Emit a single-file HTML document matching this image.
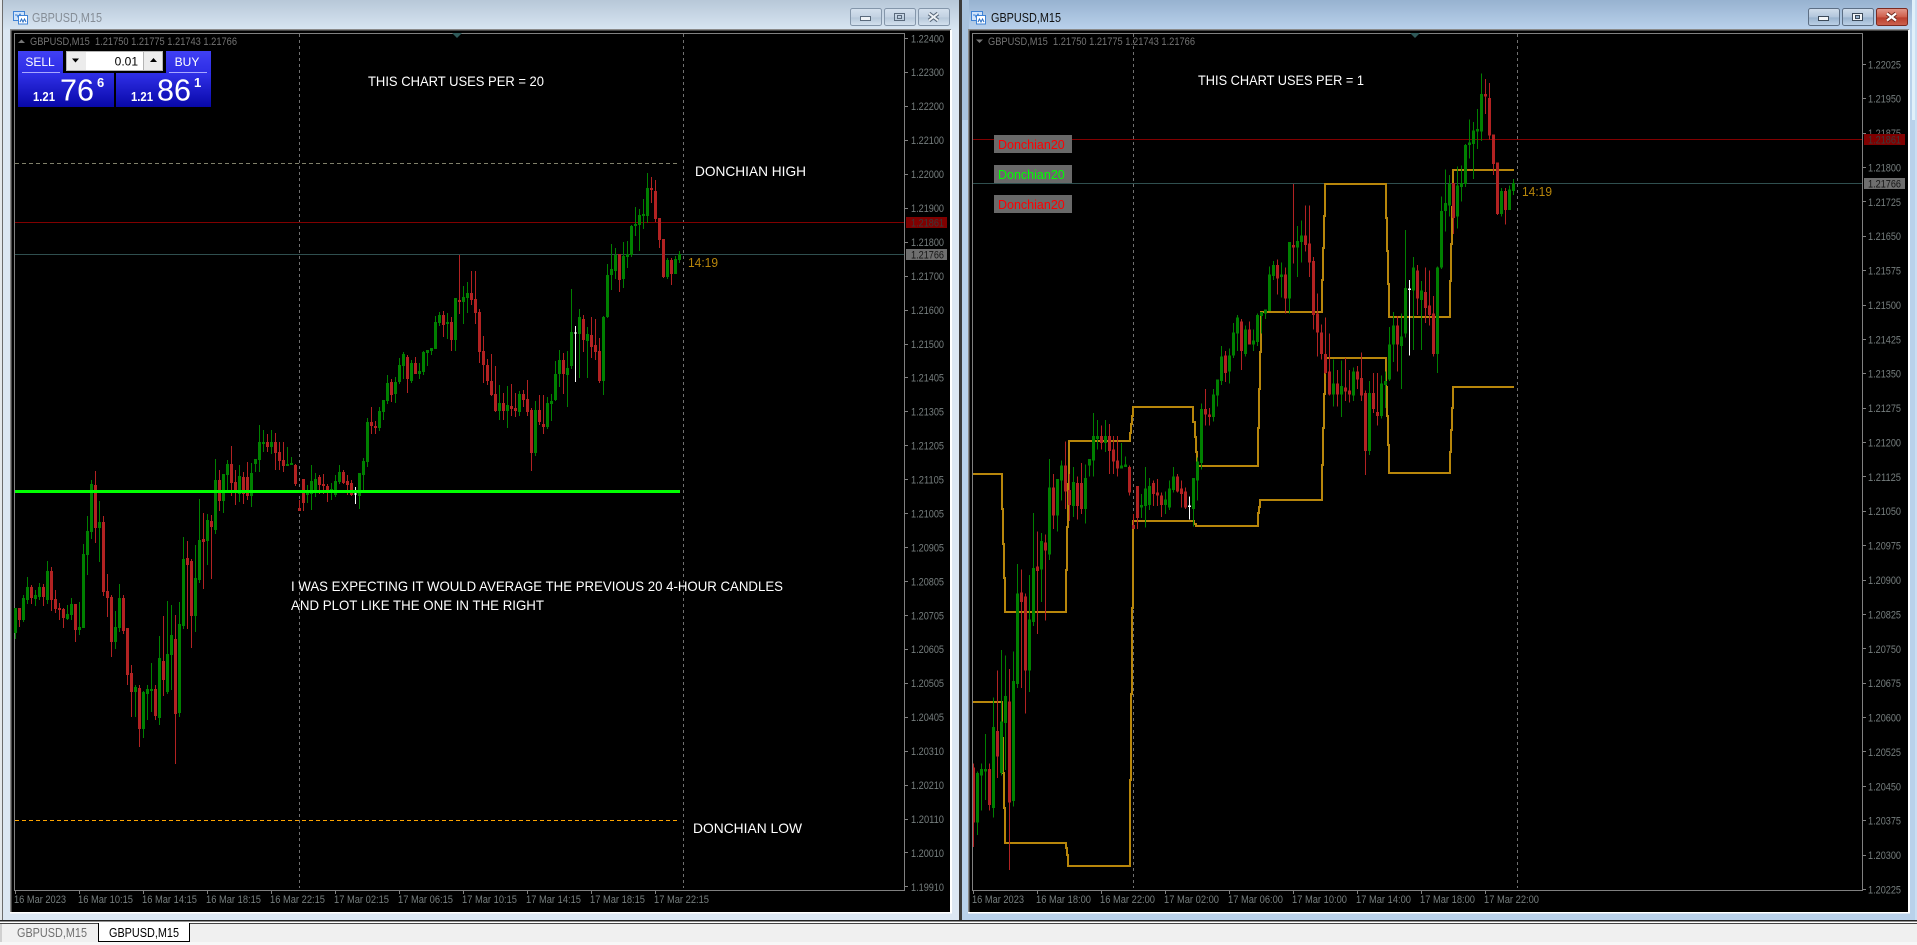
<!DOCTYPE html>
<html><head><meta charset="utf-8"><title>GBPUSD,M15</title>
<style>
html,body{margin:0;padding:0;background:#f0f0f0;overflow:hidden;width:1917px;height:945px}
svg{display:block;position:absolute;left:0;top:0}
text{font-family:"Liberation Sans",sans-serif}
</style></head><body>
<svg width="1917" height="945" viewBox="0 0 1917 945" xmlns="http://www.w3.org/2000/svg">
<defs>
<linearGradient id="ti" x1="0" y1="0" x2="0" y2="1"><stop offset="0" stop-color="#b7c7d8"/><stop offset="1" stop-color="#d8e5f2"/></linearGradient>
<linearGradient id="ta" x1="0" y1="0" x2="0" y2="1"><stop offset="0" stop-color="#97b2d0"/><stop offset="1" stop-color="#bad2ec"/></linearGradient>
<linearGradient id="bi" x1="0" y1="0" x2="0" y2="1"><stop offset="0" stop-color="#d5e1ee"/><stop offset=".5" stop-color="#c3d2e2"/><stop offset=".55" stop-color="#b6c8da"/><stop offset="1" stop-color="#d5e2ef"/></linearGradient>
<linearGradient id="ba" x1="0" y1="0" x2="0" y2="1"><stop offset="0" stop-color="#d2deec"/><stop offset=".5" stop-color="#b2c6dc"/><stop offset=".55" stop-color="#9ab3ce"/><stop offset="1" stop-color="#bdd2e8"/></linearGradient>
<linearGradient id="bc" x1="0" y1="0" x2="0" y2="1"><stop offset="0" stop-color="#e39a8c"/><stop offset=".5" stop-color="#cf5f4c"/><stop offset=".55" stop-color="#bb3f2d"/><stop offset="1" stop-color="#cc6350"/></linearGradient>
<linearGradient id="pb" x1="0" y1="0" x2="0" y2="1"><stop offset="0" stop-color="#3030e8"/><stop offset="1" stop-color="#0808a8"/></linearGradient>
<linearGradient id="hb" x1="0" y1="0" x2="0" y2="1"><stop offset="0" stop-color="#4040f4"/><stop offset="1" stop-color="#2c2ce4"/></linearGradient>
<clipPath id="rc"><rect x="973" y="34" width="889" height="856"/></clipPath>
<g id="candles" fill="none" shape-rendering="crispEdges">
<path stroke="#008000" stroke-width="1" d="M15.5 608V639M23.5 595V622M27.5 577V604M35.5 590V606M39.5 583V600M47.5 561V604M67.5 605V620M71.5 598V620M79.5 602V635M83.5 544V628M87.5 516V575M91.5 480V539M99.5 501V562M115.5 611V649M119.5 584V632M135.5 685V717M143.5 691V738M147.5 685V720M151.5 663V712M159.5 636V725M167.5 601V694M171.5 605V690M179.5 602V717M183.5 537V629M195.5 545V632M199.5 499V583M207.5 514V565M215.5 459V534M223.5 474V513M227.5 460V490M239.5 465V502M251.5 463V507M255.5 459V472M259.5 425V472M263.5 430V452M271.5 430V454M287.5 447V466M291.5 457V465M307.5 485V503M311.5 465V510M315.5 473V497M331.5 483V500M335.5 475V497M339.5 465V484M359.5 473V509M363.5 458V490M367.5 418V467M379.5 407V431M383.5 400V420M387.5 375V404M395.5 377V403M399.5 358V384M403.5 352V379M411.5 360V383M419.5 363V379M423.5 351V375M427.5 350V366M431.5 348V355M435.5 316V349M439.5 312V326M447.5 313V339M455.5 298V351M463.5 286V324M467.5 282V313M499.5 385V420M507.5 386V428M519.5 391V416M535.5 401V456M547.5 397V429M551.5 394V421M555.5 361V401M559.5 350V387M567.5 351V407M571.5 289V369M579.5 309V378M587.5 327V378M603.5 316V395M607.5 264V318M611.5 244V290M615.5 248V279M623.5 242V288M627.5 241V268M631.5 225V257M635.5 207V236M639.5 209V251M643.5 199V229M647.5 173V223M667.5 258V279M675.5 256V274M679.5 251V263"/>
<path stroke="#008000" stroke-width="3" d="M15.5 608V633M23.5 598V620M27.5 587V600M35.5 595V599M39.5 587V597M47.5 571V600M67.5 614V619M71.5 604V615M79.5 627V630M83.5 554V628M87.5 531V555M91.5 484V532M99.5 522V528M115.5 627V642M119.5 598V628M135.5 687V692M143.5 692V729M147.5 689V694M151.5 689V691M159.5 658V718M167.5 654V692M171.5 635V655M179.5 624V713M183.5 559V626M195.5 578V616M199.5 540V580M207.5 520V541M215.5 480V530M223.5 474V501M227.5 464V475M239.5 476V494M251.5 473V496M255.5 459V464M259.5 442V460M263.5 442V444M271.5 442V447M287.5 464V466M291.5 463V465M307.5 493V495M311.5 481V494M315.5 479V493M331.5 489V493M335.5 481V495M339.5 472V482M359.5 473V496M363.5 461V475M367.5 422V462M379.5 411V428M383.5 400V412M387.5 383V401M395.5 382V394M399.5 365V382M403.5 354V366M411.5 363V381M419.5 371V374M423.5 352V372M427.5 350V353M431.5 348V351M435.5 322V349M439.5 315V323M447.5 322V324M455.5 298V340M463.5 297V302M467.5 293V298M499.5 403V411M507.5 405V411M519.5 394V412M535.5 410V453M547.5 403V427M551.5 401V404M555.5 374V400M559.5 360V374M567.5 368V375M571.5 332V366M579.5 317V334M587.5 334V341M603.5 317V381M607.5 275V317M611.5 269V275M615.5 255V271M623.5 256V279M627.5 254V257M631.5 226V255M635.5 224V226M639.5 215V225M643.5 214V216M647.5 188V216M667.5 260V277M675.5 259V274M679.5 254V260"/>
<path stroke="#b22222" stroke-width="1" d="M19.5 608V627M31.5 585V604M43.5 584V606M51.5 567V611M55.5 590V613M59.5 603V620M63.5 608V628M75.5 604V642M95.5 471V543M103.5 516V596M107.5 574V617M111.5 595V657M123.5 595V634M127.5 628V685M131.5 665V717M139.5 685V747M155.5 685V720M163.5 616V696M175.5 615V764M187.5 541V629M191.5 559V648M203.5 513V589M211.5 515V579M219.5 470V511M231.5 446V496M235.5 470V505M243.5 472V504M247.5 462V500M267.5 434V452M275.5 433V470M279.5 442V470M283.5 442V472M295.5 464V486M299.5 500V511M303.5 479V511M319.5 475V494M323.5 474V494M327.5 484V502M343.5 470V484M347.5 475V495M351.5 480V496M371.5 407V434M375.5 421V434M391.5 379V402M407.5 355V393M415.5 357V374M443.5 311V337M451.5 317V351M459.5 255V314M471.5 271V305M475.5 271V324M479.5 309V363M483.5 336V383M487.5 359V385M491.5 354V396M495.5 366V412M503.5 393V420M511.5 384V416M515.5 393V417M523.5 390V407M527.5 380V416M531.5 408V471M539.5 395V425M543.5 395V434M563.5 353V394M583.5 315V352M591.5 317V358M595.5 319V360M599.5 338V383M619.5 254V292M651.5 177V203M655.5 180V222M659.5 218V248M663.5 239V278M671.5 258V285"/>
<path stroke="#b22222" stroke-width="3" d="M19.5 608V620M31.5 587V598M43.5 587V597M51.5 571V600M55.5 599V609M59.5 608V610M63.5 609V618M75.5 604V630M95.5 485V528M103.5 522V592M107.5 591V598M111.5 597V642M123.5 598V631M127.5 628V675M131.5 673V692M139.5 688V729M155.5 689V716M163.5 661V680M175.5 639V714M187.5 558V565M191.5 561V616M203.5 539V542M211.5 521V527M219.5 480V501M231.5 464V483M235.5 482V493M243.5 477V494M247.5 477V496M267.5 442V447M275.5 442V453M279.5 452V461M283.5 460V466M295.5 465V484M299.5 508V511M303.5 479V503M319.5 477V485M323.5 484V486M327.5 486V493M343.5 472V483M347.5 481V485M351.5 483V495M371.5 422V426M375.5 426V428M391.5 382V395M407.5 357V379M415.5 363V374M443.5 315V325M451.5 322V340M459.5 300V302M471.5 293V300M475.5 299V313M479.5 312V352M483.5 351V365M487.5 365V381M491.5 381V395M495.5 394V411M503.5 403V411M511.5 406V409M515.5 408V411M523.5 394V400M527.5 399V412M531.5 410V453M539.5 410V422M543.5 424V427M563.5 360V374M583.5 319V340M591.5 335V347M595.5 345V352M599.5 351V381M619.5 254V280M651.5 188V190M655.5 191V219M659.5 218V240M663.5 239V277M671.5 260V274"/>
<path stroke="#ffffff" stroke-width="1" d="M355.5 487V504M354 494H357M575.5 326V382M574 333H577"/>
</g>
</defs>

<!-- background frames -->
<rect x="0" y="0" width="961" height="921" fill="#dce7f3"/>
<rect x="0" y="0" width="961" height="30" fill="url(#ti)"/>
<rect x="0" y="0" width="2" height="921" fill="#e4e8ec"/>
<rect x="2" y="0" width="1" height="921" fill="#6c6c6c"/>
<rect x="962" y="0" width="955" height="921" fill="#b9d1ea"/>
<rect x="962" y="0" width="955" height="30" fill="url(#ta)"/>
<rect x="959" y="0" width="3" height="921" fill="#3a3a3a"/>
<rect x="962" y="0" width="7" height="120" fill="#a8c2dd"/>
<rect x="1912" y="0" width="3" height="120" fill="#e0f0fa"/>
<rect x="1915" y="0" width="2" height="921" fill="#c9def2"/>

<!-- left window -->
<rect x="11" y="30" width="939" height="882" fill="#000"/>
<rect x="10" y="29" width="941" height="1.5" fill="#8a8a8a"/>
<rect x="10" y="29" width="1.5" height="883" fill="#8a8a8a"/>
<rect x="10" y="912" width="942" height="1.5" fill="#fff"/>
<rect x="950" y="30" width="2" height="883" fill="#fff"/>

<!-- right window -->
<rect x="969" y="30" width="939" height="882" fill="#000"/>
<rect x="968" y="29" width="941" height="1.5" fill="#8a8a8a"/>
<rect x="968" y="29" width="1.5" height="883" fill="#8a8a8a"/>
<rect x="968" y="912" width="942" height="1.5" fill="#fff"/>
<rect x="1908" y="30" width="2" height="883" fill="#fff"/>

<!-- title left -->
<g>
<rect x="13.5" y="11.5" width="11" height="9" fill="#cfe3fa" stroke="#3f83d6"/>
<rect x="18.5" y="15.5" width="9" height="8.5" fill="#fff" stroke="#3f83d6"/>
<path d="M15 15h2l1 2 2-3 1 2" fill="none" stroke="#3f83d6"/>
<path d="M20 22l1.5-3 1.5 3 1.5-3 1.5 3" fill="none" stroke="#2a6fc4"/>
</g>
<text x="32" y="22" font-size="13" fill="#858d96" textLength="70" lengthAdjust="spacingAndGlyphs">GBPUSD,M15</text>
<g>
<rect x="850.5" y="8.5" width="31" height="17" rx="2" fill="url(#bi)" stroke="#8496aa"/>
<rect x="884.5" y="8.5" width="31" height="17" rx="2" fill="url(#bi)" stroke="#8496aa"/>
<rect x="918.5" y="8.5" width="31" height="17" rx="2" fill="url(#bi)" stroke="#8496aa"/>
<rect x="860.5" y="16.5" width="10" height="4" fill="#eef2f6" stroke="#5a6a7c"/>
<rect x="894.5" y="13.5" width="10" height="7" fill="none" stroke="#5a6a7c" stroke-width="1"/>
<rect x="897.5" y="15.5" width="4" height="3" fill="none" stroke="#5a6a7c"/>
<path d="M929 13.5l9 7M938 13.5l-9 7" stroke="#5a6a7c" stroke-width="4"/>
<path d="M929 13.5l9 7M938 13.5l-9 7" stroke="#eef2f6" stroke-width="2"/>
</g>

<!-- title right -->
<g>
<rect x="971.5" y="11.5" width="11" height="9" fill="#cfe3fa" stroke="#3f83d6"/>
<rect x="976.5" y="15.5" width="9" height="8.5" fill="#fff" stroke="#3f83d6"/>
<path d="M973 15h2l1 2 2-3 1 2" fill="none" stroke="#3f83d6"/>
<path d="M978 22l1.5-3 1.5 3 1.5-3 1.5 3" fill="none" stroke="#2a6fc4"/>
</g>
<text x="991" y="22" font-size="13" fill="#111" textLength="70" lengthAdjust="spacingAndGlyphs">GBPUSD,M15</text>
<g>
<rect x="1808.5" y="8.5" width="31" height="17" rx="2" fill="url(#ba)" stroke="#5d6f85"/>
<rect x="1842.5" y="8.5" width="31" height="17" rx="2" fill="url(#ba)" stroke="#5d6f85"/>
<rect x="1876.5" y="8.5" width="31" height="17" rx="2" fill="url(#bc)" stroke="#7b2a20"/>
<rect x="1818.5" y="16.5" width="10" height="4" fill="#f2f5f8" stroke="#3c4a5a"/>
<rect x="1852.5" y="13.5" width="10" height="7" fill="#f2f5f8" stroke="#3c4a5a"/>
<rect x="1855.5" y="15.5" width="4" height="3" fill="#9ab3ce" stroke="#3c4a5a"/>
<path d="M1887 13.5l9 7M1896 13.5l-9 7" stroke="#6e2a20" stroke-width="4"/>
<path d="M1887 13.5l9 7M1896 13.5l-9 7" stroke="#fff" stroke-width="2.2"/>
</g>

<!-- LEFT CHART -->
<path d="M14.5 33.5H904.5V890.5H14.5Z" fill="none" stroke="#808080" shape-rendering="crispEdges"/>
<path d="M457 33h10l-5 5z" transform="translate(-5 0)" fill="#2f5a5a"/>
<path d="M299.5 34V888M683.5 34V888" stroke="#707070" stroke-dasharray="3 3" shape-rendering="crispEdges"/>
<path d="M15 163.5H678" stroke="#80806a" stroke-dasharray="4 3" shape-rendering="crispEdges"/>
<path d="M15 222.5H904" stroke="#800000" shape-rendering="crispEdges"/>
<path d="M15 254.5H904" stroke="#2f4f4f" shape-rendering="crispEdges"/>
<use href="#candles"/>
<rect x="15" y="490" width="665" height="3" fill="#00ff00"/>
<path d="M15 820.5H678" stroke="#ffa500" stroke-dasharray="4 3" shape-rendering="crispEdges"/>

<path d="M18 43l3.5-3.5 3.5 3.5z" fill="#777"/>
<text x="30" y="45" font-size="11" fill="#737373" textLength="207" lengthAdjust="spacingAndGlyphs" xml:space="preserve">GBPUSD,M15  1.21750 1.21775 1.21743 1.21766</text>

<!-- one click trading -->
<rect x="18" y="51" width="45" height="23" fill="url(#hb)"/>
<rect x="166" y="51" width="45" height="23" fill="url(#hb)"/>
<rect x="18" y="73" width="96" height="34" fill="url(#pb)"/>
<rect x="116" y="73" width="95" height="34" fill="url(#pb)"/>
<rect x="22" y="72" width="38" height="1" fill="#a8a8ff"/>
<rect x="169" y="72" width="38" height="1" fill="#a8a8ff"/>
<text x="40" y="66" font-size="12" fill="#fff" text-anchor="middle">SELL</text>
<text x="187" y="66" font-size="12" fill="#fff" text-anchor="middle">BUY</text>
<rect x="66" y="51" width="97" height="20" fill="#b4b4b4"/>
<rect x="67" y="52" width="19" height="18" fill="#ececec"/>
<rect x="86" y="52" width="57" height="18" fill="#fff"/>
<rect x="144" y="52" width="18" height="18" fill="#ececec"/>
<path d="M72 58.5h7l-3.500 4z" fill="#000"/>
<path d="M150 62h7l-3.500-4z" fill="#000"/>
<text x="138" y="65.500" font-size="12" fill="#000" text-anchor="end">0.01</text>
<text x="33" y="101" font-size="13" font-weight="bold" fill="#fff" textLength="22" lengthAdjust="spacingAndGlyphs">1.21</text>
<text x="60" y="100.500" font-size="31" fill="#fff" textLength="34" lengthAdjust="spacingAndGlyphs">76</text>
<text x="97" y="87" font-size="13" font-weight="bold" fill="#fff">6</text>
<text x="131" y="101" font-size="13" font-weight="bold" fill="#fff" textLength="22" lengthAdjust="spacingAndGlyphs">1.21</text>
<text x="157" y="100.500" font-size="31" fill="#fff" textLength="34" lengthAdjust="spacingAndGlyphs">86</text>
<text x="194" y="87" font-size="13" font-weight="bold" fill="#fff">1</text>

<!-- left annotations -->
<g fill="#fff" font-size="14">
<text x="368" y="86" textLength="176" lengthAdjust="spacingAndGlyphs">THIS CHART USES PER = 20</text>
<text x="695" y="176" textLength="111" lengthAdjust="spacingAndGlyphs">DONCHIAN HIGH</text>
<text x="693" y="833" textLength="109" lengthAdjust="spacingAndGlyphs">DONCHIAN LOW</text>
<text x="291" y="591" textLength="492" lengthAdjust="spacingAndGlyphs">I WAS EXPECTING IT WOULD AVERAGE THE PREVIOUS 20 4-HOUR CANDLES</text>
<text x="291" y="610" textLength="253" lengthAdjust="spacingAndGlyphs">AND PLOT LIKE THE ONE IN THE RIGHT</text>
<text x="1198" y="85" textLength="166" lengthAdjust="spacingAndGlyphs">THIS CHART USES PER = 1</text>
</g>
<text x="688" y="267" font-size="13" fill="#b8860b" textLength="30" lengthAdjust="spacingAndGlyphs">14:19</text>

<!-- left price axis -->
<path stroke="#808080" shape-rendering="crispEdges" d="M905 38.500h3M905 72.500h3M905 106.500h3M905 140.500h3M905 174.500h3M905 208.500h3M905 242.500h3M905 276.500h3M905 310.500h3M905 344.500h3M905 377.500h3M905 411.500h3M905 445.500h3M905 479.500h3M905 513.500h3M905 547.500h3M905 581.500h3M905 615.500h3M905 649.500h3M905 683.500h3M905 717.500h3M905 751.500h3M905 785.500h3M905 819.500h3M905 852.500h3M905 886.500h3"/>
<g font-size="11" fill="#767e7e">
<text x="911" y="42.300" textLength="33" lengthAdjust="spacingAndGlyphs">1.22400</text>
<text x="911" y="76.200" textLength="33" lengthAdjust="spacingAndGlyphs">1.22300</text>
<text x="911" y="110.200" textLength="33" lengthAdjust="spacingAndGlyphs">1.22200</text>
<text x="911" y="144.100" textLength="33" lengthAdjust="spacingAndGlyphs">1.22100</text>
<text x="911" y="178.100" textLength="33" lengthAdjust="spacingAndGlyphs">1.22000</text>
<text x="911" y="212" textLength="33" lengthAdjust="spacingAndGlyphs">1.21900</text>
<text x="911" y="246" textLength="33" lengthAdjust="spacingAndGlyphs">1.21800</text>
<text x="911" y="279.900" textLength="33" lengthAdjust="spacingAndGlyphs">1.21700</text>
<text x="911" y="313.800" textLength="33" lengthAdjust="spacingAndGlyphs">1.21600</text>
<text x="911" y="347.800" textLength="33" lengthAdjust="spacingAndGlyphs">1.21500</text>
<text x="911" y="381.700" textLength="33" lengthAdjust="spacingAndGlyphs">1.21405</text>
<text x="911" y="415.600" textLength="33" lengthAdjust="spacingAndGlyphs">1.21305</text>
<text x="911" y="449.600" textLength="33" lengthAdjust="spacingAndGlyphs">1.21205</text>
<text x="911" y="483.500" textLength="33" lengthAdjust="spacingAndGlyphs">1.21105</text>
<text x="911" y="517.500" textLength="33" lengthAdjust="spacingAndGlyphs">1.21005</text>
<text x="911" y="551.400" textLength="33" lengthAdjust="spacingAndGlyphs">1.20905</text>
<text x="911" y="585.300" textLength="33" lengthAdjust="spacingAndGlyphs">1.20805</text>
<text x="911" y="619.300" textLength="33" lengthAdjust="spacingAndGlyphs">1.20705</text>
<text x="911" y="653.200" textLength="33" lengthAdjust="spacingAndGlyphs">1.20605</text>
<text x="911" y="687.200" textLength="33" lengthAdjust="spacingAndGlyphs">1.20505</text>
<text x="911" y="721.100" textLength="33" lengthAdjust="spacingAndGlyphs">1.20405</text>
<text x="911" y="755" textLength="33" lengthAdjust="spacingAndGlyphs">1.20310</text>
<text x="911" y="789" textLength="33" lengthAdjust="spacingAndGlyphs">1.20210</text>
<text x="911" y="822.900" textLength="33" lengthAdjust="spacingAndGlyphs">1.20110</text>
<text x="911" y="856.900" textLength="33" lengthAdjust="spacingAndGlyphs">1.20010</text>
<text x="911" y="890.800" textLength="33" lengthAdjust="spacingAndGlyphs">1.19910</text>
</g>
<rect x="906" y="217" width="41" height="11" fill="#800000"/>
<text x="911" y="226.500" font-size="11" fill="#3a3a3a" textLength="33" lengthAdjust="spacingAndGlyphs">1.21861</text>
<rect x="906" y="249" width="41" height="11" fill="#6e6e6e"/>
<text x="911" y="258.500" font-size="11" fill="#151515" textLength="33" lengthAdjust="spacingAndGlyphs">1.21766</text>

<!-- left time axis -->
<path stroke="#808080" shape-rendering="crispEdges" d="M15.500 891v3M79.500 891v3M143.500 891v3M207.500 891v3M271.500 891v3M335.500 891v3M399.500 891v3M463.500 891v3M527.500 891v3M591.500 891v3M655.500 891v3"/>
<g font-size="11" fill="#767e7e">
<text x="14" y="903" textLength="52" lengthAdjust="spacingAndGlyphs">16 Mar 2023</text>
<text x="78" y="903" textLength="55" lengthAdjust="spacingAndGlyphs">16 Mar 10:15</text>
<text x="142" y="903" textLength="55" lengthAdjust="spacingAndGlyphs">16 Mar 14:15</text>
<text x="206" y="903" textLength="55" lengthAdjust="spacingAndGlyphs">16 Mar 18:15</text>
<text x="270" y="903" textLength="55" lengthAdjust="spacingAndGlyphs">16 Mar 22:15</text>
<text x="334" y="903" textLength="55" lengthAdjust="spacingAndGlyphs">17 Mar 02:15</text>
<text x="398" y="903" textLength="55" lengthAdjust="spacingAndGlyphs">17 Mar 06:15</text>
<text x="462" y="903" textLength="55" lengthAdjust="spacingAndGlyphs">17 Mar 10:15</text>
<text x="526" y="903" textLength="55" lengthAdjust="spacingAndGlyphs">17 Mar 14:15</text>
<text x="590" y="903" textLength="55" lengthAdjust="spacingAndGlyphs">17 Mar 18:15</text>
<text x="654" y="903" textLength="55" lengthAdjust="spacingAndGlyphs">17 Mar 22:15</text>
</g>

<!-- RIGHT CHART -->
<path d="M972.500 33.500H1862.500V890.500H972.500Z" fill="none" stroke="#808080" shape-rendering="crispEdges"/>
<path d="M1410 33h10l-5 5z" fill="#2f5a5a"/>
<path d="M1133.500 34V888M1517.500 34V888" stroke="#707070" stroke-dasharray="3 3" shape-rendering="crispEdges"/>
<path d="M973 139.500H1862" stroke="#800000" shape-rendering="crispEdges"/>
<path d="M973 183.500H1862" stroke="#2f4f4f" shape-rendering="crispEdges"/>
<g fill="none" stroke="#b8860b" stroke-width="2" shape-rendering="crispEdges">
<polyline points="973,474 1002,474 1002,509 1003,509 1003,544 1004,544 1004,578 1005,578 1005,612 1066,612 1066,570 1067,570 1067,527 1068,527 1068,484 1069,484 1069,441 1130,441 1130,433 1131,433 1131,424 1132,424 1132,416 1133,416 1133,407 1193,407 1193,422 1195,422 1195,437 1196,437 1196,452 1197,452 1197,466 1258,466 1258,428 1259,428 1259,389 1260,389 1260,352 1261,352 1261,312 1322,312 1322,280 1323,280 1323,248 1324,248 1324,216 1325,216 1325,184 1386,184 1386,218 1387,218 1387,251 1388,251 1388,284 1389,284 1389,317 1450,317 1450,281 1451,281 1451,244 1452,244 1452,207 1453,207 1453,170 1514,170"/>
<polyline points="973,702 1002,702 1002,738 1003,738 1003,773 1004,773 1004,808 1005,808 1005,843 1066,843 1066,848 1067,848 1067,855 1068,855 1068,866 1130,866 1130,780 1131,780 1131,694 1132,694 1132,608 1133,608 1133,521 1194,521 1194,524 1196,524 1196,526 1258,526 1258,513 1259,513 1259,507 1260,507 1260,500 1322,500 1322,465 1323,465 1323,428 1324,428 1324,394 1325,394 1325,358 1386,358 1386,387 1387,387 1387,416 1388,416 1388,445 1389,445 1389,473 1450,473 1450,452 1451,452 1451,430 1452,430 1452,408 1453,408 1453,387 1514,387"/>
</g>
<g clip-path="url(#rc)"><use href="#candles" transform="translate(834,-159.300) scale(1,1.347)"/></g>

<path d="M976 39.500h7l-3.500 3.500z" fill="#777"/>
<text x="988" y="45" font-size="11" fill="#737373" textLength="207" lengthAdjust="spacingAndGlyphs" xml:space="preserve">GBPUSD,M15  1.21750 1.21775 1.21743 1.21766</text>

<rect x="994" y="135" width="78" height="18" fill="#696969"/>
<rect x="994" y="165" width="78" height="18" fill="#696969"/>
<rect x="994" y="195" width="78" height="18" fill="#696969"/>
<text x="998" y="149" font-size="12.500" fill="#ff0000">Donchian20</text>
<text x="998" y="179" font-size="12.500" fill="#00ff00">Donchian20</text>
<text x="998" y="209" font-size="12.500" fill="#ff0000">Donchian20</text>
<text x="1522" y="196" font-size="13" fill="#b8860b" textLength="30" lengthAdjust="spacingAndGlyphs">14:19</text>

<!-- right price axis -->
<path stroke="#808080" shape-rendering="crispEdges" d="M1863 64.500h3M1863 98.500h3M1863 133.500h3M1863 167.500h3M1863 201.500h3M1863 236.500h3M1863 270.500h3M1863 305.500h3M1863 339.500h3M1863 373.500h3M1863 408.500h3M1863 442.500h3M1863 476.500h3M1863 511.500h3M1863 545.500h3M1863 580.500h3M1863 614.500h3M1863 648.500h3M1863 683.500h3M1863 717.500h3M1863 751.500h3M1863 786.500h3M1863 820.500h3M1863 855.500h3M1863 889.500h3"/>
<g font-size="11" fill="#767e7e">
<text x="1868" y="68.300" textLength="33" lengthAdjust="spacingAndGlyphs">1.22025</text>
<text x="1868" y="102.700" textLength="33" lengthAdjust="spacingAndGlyphs">1.21950</text>
<text x="1868" y="137.100" textLength="33" lengthAdjust="spacingAndGlyphs">1.21875</text>
<text x="1868" y="171.400" textLength="33" lengthAdjust="spacingAndGlyphs">1.21800</text>
<text x="1868" y="205.800" textLength="33" lengthAdjust="spacingAndGlyphs">1.21725</text>
<text x="1868" y="240.200" textLength="33" lengthAdjust="spacingAndGlyphs">1.21650</text>
<text x="1868" y="274.600" textLength="33" lengthAdjust="spacingAndGlyphs">1.21575</text>
<text x="1868" y="309" textLength="33" lengthAdjust="spacingAndGlyphs">1.21500</text>
<text x="1868" y="343.300" textLength="33" lengthAdjust="spacingAndGlyphs">1.21425</text>
<text x="1868" y="377.700" textLength="33" lengthAdjust="spacingAndGlyphs">1.21350</text>
<text x="1868" y="412.100" textLength="33" lengthAdjust="spacingAndGlyphs">1.21275</text>
<text x="1868" y="446.500" textLength="33" lengthAdjust="spacingAndGlyphs">1.21200</text>
<text x="1868" y="480.900" textLength="33" lengthAdjust="spacingAndGlyphs">1.21125</text>
<text x="1868" y="515.200" textLength="33" lengthAdjust="spacingAndGlyphs">1.21050</text>
<text x="1868" y="549.600" textLength="33" lengthAdjust="spacingAndGlyphs">1.20975</text>
<text x="1868" y="584" textLength="33" lengthAdjust="spacingAndGlyphs">1.20900</text>
<text x="1868" y="618.400" textLength="33" lengthAdjust="spacingAndGlyphs">1.20825</text>
<text x="1868" y="652.800" textLength="33" lengthAdjust="spacingAndGlyphs">1.20750</text>
<text x="1868" y="687.100" textLength="33" lengthAdjust="spacingAndGlyphs">1.20675</text>
<text x="1868" y="721.500" textLength="33" lengthAdjust="spacingAndGlyphs">1.20600</text>
<text x="1868" y="755.900" textLength="33" lengthAdjust="spacingAndGlyphs">1.20525</text>
<text x="1868" y="790.300" textLength="33" lengthAdjust="spacingAndGlyphs">1.20450</text>
<text x="1868" y="824.700" textLength="33" lengthAdjust="spacingAndGlyphs">1.20375</text>
<text x="1868" y="859" textLength="33" lengthAdjust="spacingAndGlyphs">1.20300</text>
<text x="1868" y="893.400" textLength="33" lengthAdjust="spacingAndGlyphs">1.20225</text>
</g>
<rect x="1864" y="134" width="41" height="11" fill="#800000"/>
<text x="1868" y="143.500" font-size="11" fill="#3a3a3a" textLength="33" lengthAdjust="spacingAndGlyphs">1.21861</text>
<rect x="1864" y="178" width="41" height="11" fill="#6e6e6e"/>
<text x="1868" y="187.500" font-size="11" fill="#151515" textLength="33" lengthAdjust="spacingAndGlyphs">1.21766</text>

<!-- right time axis -->
<path stroke="#808080" shape-rendering="crispEdges" d="M973.500 891v3M1037.500 891v3M1101.500 891v3M1165.500 891v3M1229.500 891v3M1293.500 891v3M1357.500 891v3M1421.500 891v3M1485.500 891v3"/>
<g font-size="11" fill="#767e7e">
<text x="972" y="903" textLength="52" lengthAdjust="spacingAndGlyphs">16 Mar 2023</text>
<text x="1036" y="903" textLength="55" lengthAdjust="spacingAndGlyphs">16 Mar 18:00</text>
<text x="1100" y="903" textLength="55" lengthAdjust="spacingAndGlyphs">16 Mar 22:00</text>
<text x="1164" y="903" textLength="55" lengthAdjust="spacingAndGlyphs">17 Mar 02:00</text>
<text x="1228" y="903" textLength="55" lengthAdjust="spacingAndGlyphs">17 Mar 06:00</text>
<text x="1292" y="903" textLength="55" lengthAdjust="spacingAndGlyphs">17 Mar 10:00</text>
<text x="1356" y="903" textLength="55" lengthAdjust="spacingAndGlyphs">17 Mar 14:00</text>
<text x="1420" y="903" textLength="55" lengthAdjust="spacingAndGlyphs">17 Mar 18:00</text>
<text x="1484" y="903" textLength="55" lengthAdjust="spacingAndGlyphs">17 Mar 22:00</text>
</g>

<!-- tab bar -->
<rect x="0" y="920" width="1917" height="25" fill="#f0f0f0"/>
<rect x="0" y="920" width="1917" height="1.500" fill="#222"/>
<rect x="0" y="921.500" width="1917" height="1.500" fill="#fff"/>
<rect x="0" y="923" width="1917" height="1" fill="#444"/>
<rect x="0" y="942" width="1917" height="3" fill="#f7f7f7"/>
<rect x="0" y="924" width="2" height="18" fill="#d0d0d0"/>
<text x="17" y="937" font-size="13" fill="#707070" textLength="70" lengthAdjust="spacingAndGlyphs">GBPUSD,M15</text>
<path d="M98.500 923V941.500H189.500V923" fill="#fff" stroke="#000" stroke-width="1"/>
<text x="109" y="937" font-size="13" fill="#000" textLength="70" lengthAdjust="spacingAndGlyphs">GBPUSD,M15</text>
</svg>
</body></html>
